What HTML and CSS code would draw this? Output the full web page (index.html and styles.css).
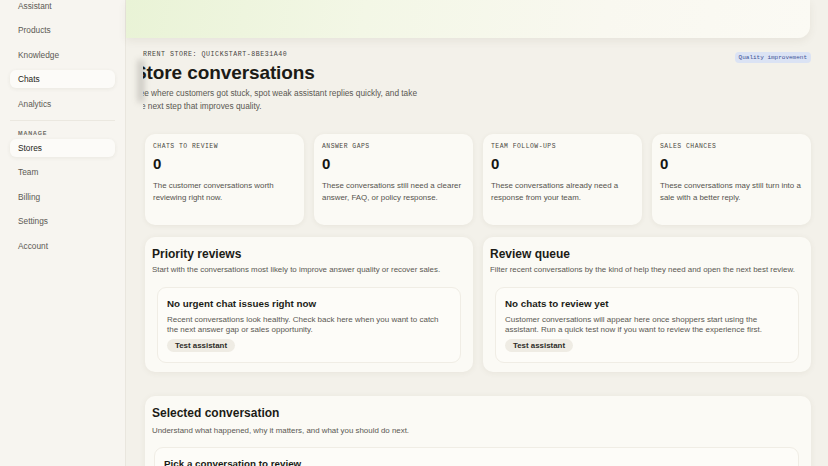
FILE: index.html
```html
<!DOCTYPE html>
<html lang="en">

<head>
    <meta charset="UTF-8">
    <meta name="viewport" content="width=device-width, initial-scale=1.0">
    <title>Store conversations</title>
    <link rel="stylesheet" href="styles.css">
</head>

<body>
    <div id="app">
        <!-- 侧边栏 -->
        <aside id="sidebar">
            <ul class="nav">
                <li>Assistant</li>
                <li>Products</li>
                <li>Knowledge</li>
                <li class="nav-active">Chats</li>
                <li>Analytics</li>
            </ul>
            <div class="nav-line"></div>
            <p class="nav-title">MANAGE</p>
            <ul class="nav">
                <li class="nav-active">Stores</li>
                <li>Team</li>
                <li>Billing</li>
                <li>Settings</li>
                <li>Account</li>
            </ul>
        </aside>

        <main id="main">
            <div class="hero"></div>

            <div class="page-head">
                <div class="head-text">
                    <div class="head-inner">
                        <p class="eyebrow">CURRENT STORE: QUICKSTART-8BE31A40</p>
                        <h1>Store conversations</h1>
                        <p class="lead">See where customers got stuck, spot weak assistant replies quickly, and take the next step that improves quality.</p>
                    </div>
                </div>
                <span class="tag">Quality improvement</span>
            </div>

            <!-- 数据卡片 -->
            <div class="stats">
                <div class="stat">
                    <p class="stat-label">CHATS TO REVIEW</p>
                    <p class="stat-num">0</p>
                    <p class="stat-text">The customer conversations worth reviewing right now.</p>
                </div>
                <div class="stat">
                    <p class="stat-label">ANSWER GAPS</p>
                    <p class="stat-num">0</p>
                    <p class="stat-text">These conversations still need a clearer answer, FAQ, or policy response.</p>
                </div>
                <div class="stat">
                    <p class="stat-label">TEAM FOLLOW-UPS</p>
                    <p class="stat-num">0</p>
                    <p class="stat-text">These conversations already need a response from your team.</p>
                </div>
                <div class="stat">
                    <p class="stat-label">SALES CHANCES</p>
                    <p class="stat-num">0</p>
                    <p class="stat-text">These conversations may still turn into a sale with a better reply.</p>
                </div>
            </div>

            <div class="panels">
                <section class="panel">
                    <h2>Priority reviews</h2>
                    <p class="panel-sub">Start with the conversations most likely to improve answer quality or recover sales.</p>
                    <div class="empty">
                        <h3>No urgent chat issues right now</h3>
                        <p>Recent conversations look healthy. Check back here when you want to catch the next answer gap or sales opportunity.</p>
                        <button class="btn">Test assistant</button>
                    </div>
                </section>
                <section class="panel">
                    <h2>Review queue</h2>
                    <p class="panel-sub">Filter recent conversations by the kind of help they need and open the next best review.</p>
                    <div class="empty">
                        <h3>No chats to review yet</h3>
                        <p>Customer conversations will appear here once shoppers start using the assistant. Run a quick test now if you want to review the experience first.</p>
                        <button class="btn">Test assistant</button>
                    </div>
                </section>
            </div>

            <section class="panel panel-wide">
                <h2>Selected conversation</h2>
                <p class="panel-sub">Understand what happened, why it matters, and what you should do next.</p>
                <div class="empty empty-wide">
                    <h3>Pick a conversation to review</h3>
                </div>
            </section>
        </main>
    </div>
</body>

</html>
```

FILE: styles.css
```css
* {
    margin: 0;
    padding: 0;
    box-sizing: border-box;
}

ul {
    list-style: none;
}

body {
    font-family: "Liberation Sans", Arial, sans-serif;
    background: #f3f1ea;
    color: #1e1e19;
    height: 466px;
    overflow: hidden;
}

#app {
    display: flex;
    height: 466px;
}

/* 侧边栏 */
#sidebar {
    width: 126px;
    flex-shrink: 0;
    background: #f7f5f0;
    border-right: 1px solid #e9e6de;
    padding: 0 10px;
}

#sidebar .nav:first-child {
    margin-top: -6px;
}

.nav li {
    height: 24.4px;
    line-height: 24.4px;
    font-size: 8.3px;
    color: #5c5a54;
    padding-left: 8px;
    border-radius: 6px;
}

.nav .nav-active {
    background: #fcfbf8;
    color: #1e1e19;
    box-shadow: 0 1px 4px rgba(60, 50, 30, 0.07);
    height: 18px;
    line-height: 18px;
    margin: 3px 0 3.4px;
}

.nav-line {
    height: 1px;
    background: #ebe8e0;
    margin: 4px 0 9px;
}

.nav-title {
    font-size: 5.5px;
    font-weight: bold;
    letter-spacing: 0.8px;
    color: #6a6760;
    padding-left: 8px;
    margin-bottom: 2px;
}

/* 主体 */
#main {
    flex: 1;
    padding: 0 17px 0 19px;
    display: flex;
    flex-direction: column;
    min-width: 0;
}

.hero {
    height: 38px;
    margin-left: -19px;
    margin-right: 1px;
    border-radius: 0 0 12px 0;
    background: linear-gradient(100deg, #e9f3d6 0%, #f3f7e6 35%, #f9f8f0 70%, #fbfaf4 100%);
    box-shadow: 0 3px 8px rgba(90, 80, 50, 0.08);
    flex-shrink: 0;
}

.page-head {
    display: flex;
    justify-content: space-between;
    align-items: flex-start;
    margin: 12px 0 0 -2px;
    position: relative;
}

/* 左侧的阴影 */
.page-head::before {
    content: "";
    position: absolute;
    left: -5px;
    top: 10px;
    width: 6px;
    height: 42px;
    background: rgba(40, 36, 28, 0.22);
    filter: blur(3px);
}

.head-text {
    overflow: hidden;
}

.head-inner {
    margin-left: -9px;
}

.eyebrow {
    font-family: "Liberation Mono", monospace;
    font-size: 6.6px;
    line-height: 10px;
    letter-spacing: 0.55px;
    color: #47453f;
}

h1 {
    font-size: 19px;
    line-height: 26px;
    font-weight: bold;
    color: #1b1b16;
    letter-spacing: -0.1px;
}

.lead {
    font-size: 8.3px;
    line-height: 13px;
    color: #5a5852;
    max-width: 292px;
    margin-top: 1px;
}

.tag {
    margin-top: 2px;
    background: #dbe3f4;
    color: #3b5296;
    font-family: "Liberation Mono", monospace;
    font-size: 6px;
    line-height: 11px;
    padding: 0 4px;
    border-radius: 4px;
}

/* 数据卡片 */
.stats {
    display: grid;
    grid-template-columns: repeat(4, 1fr);
    gap: 10px;
    margin-top: 21px;
}

.stat {
    height: 91px;
    background: #fbfaf5;
    border-radius: 10px;
    padding: 8px 8px 0;
    box-shadow: 0 1px 5px rgba(80, 70, 40, 0.07);
}

.stat-label {
    font-family: "Liberation Mono", monospace;
    font-size: 6.4px;
    line-height: 10px;
    letter-spacing: 0.5px;
    color: #4a4842;
}

.stat-num {
    font-size: 15px;
    line-height: 18px;
    font-weight: bold;
    color: #161612;
    margin-top: 3px;
}

.stat-text {
    font-size: 7.9px;
    line-height: 12px;
    color: #55534d;
    margin-top: 7px;
}

/* 面板 */
.panels {
    display: grid;
    grid-template-columns: 1fr 1fr;
    gap: 10px;
    margin-top: 12px;
}

.panel {
    background: #fbfaf5;
    border-radius: 10px;
    padding: 9px 12px 9px;
    box-shadow: 0 1px 6px rgba(80, 70, 40, 0.07);
}

.panel h2 {
    font-size: 12px;
    line-height: 16px;
    font-weight: bold;
    color: #1c1c17;
    margin-left: -5px;
}

.panel-sub {
    font-size: 7.9px;
    line-height: 12px;
    color: #5a5852;
    margin: 2px 0 0 -5px;
    white-space: nowrap;
}

.empty {
    background: #fdfcf8;
    border: 1px solid #f0ede5;
    border-radius: 9px;
    margin-top: 11px;
    padding: 9px 12px 10px 9px;
}

.empty h3 {
    font-size: 9.8px;
    line-height: 14px;
    font-weight: bold;
    color: #1c1c17;
}

.empty p {
    font-size: 8px;
    line-height: 9.5px;
    color: #5a5852;
    margin-top: 4px;
}

.btn {
    margin-top: 4px;
    border: none;
    background: #efece4;
    color: #2e2d28;
    font-family: "Liberation Sans", Arial, sans-serif;
    font-size: 7.9px;
    font-weight: bold;
    line-height: 13px;
    padding: 0 8px;
    border-radius: 8px;
}

.panel-wide {
    margin-top: 24px;
    flex-shrink: 0;
}

.panel-wide .panel-sub {
    margin-top: 4px;
}

.empty-wide {
    margin: 10px 0 0 -3px;
    padding-top: 9px;
}
```
